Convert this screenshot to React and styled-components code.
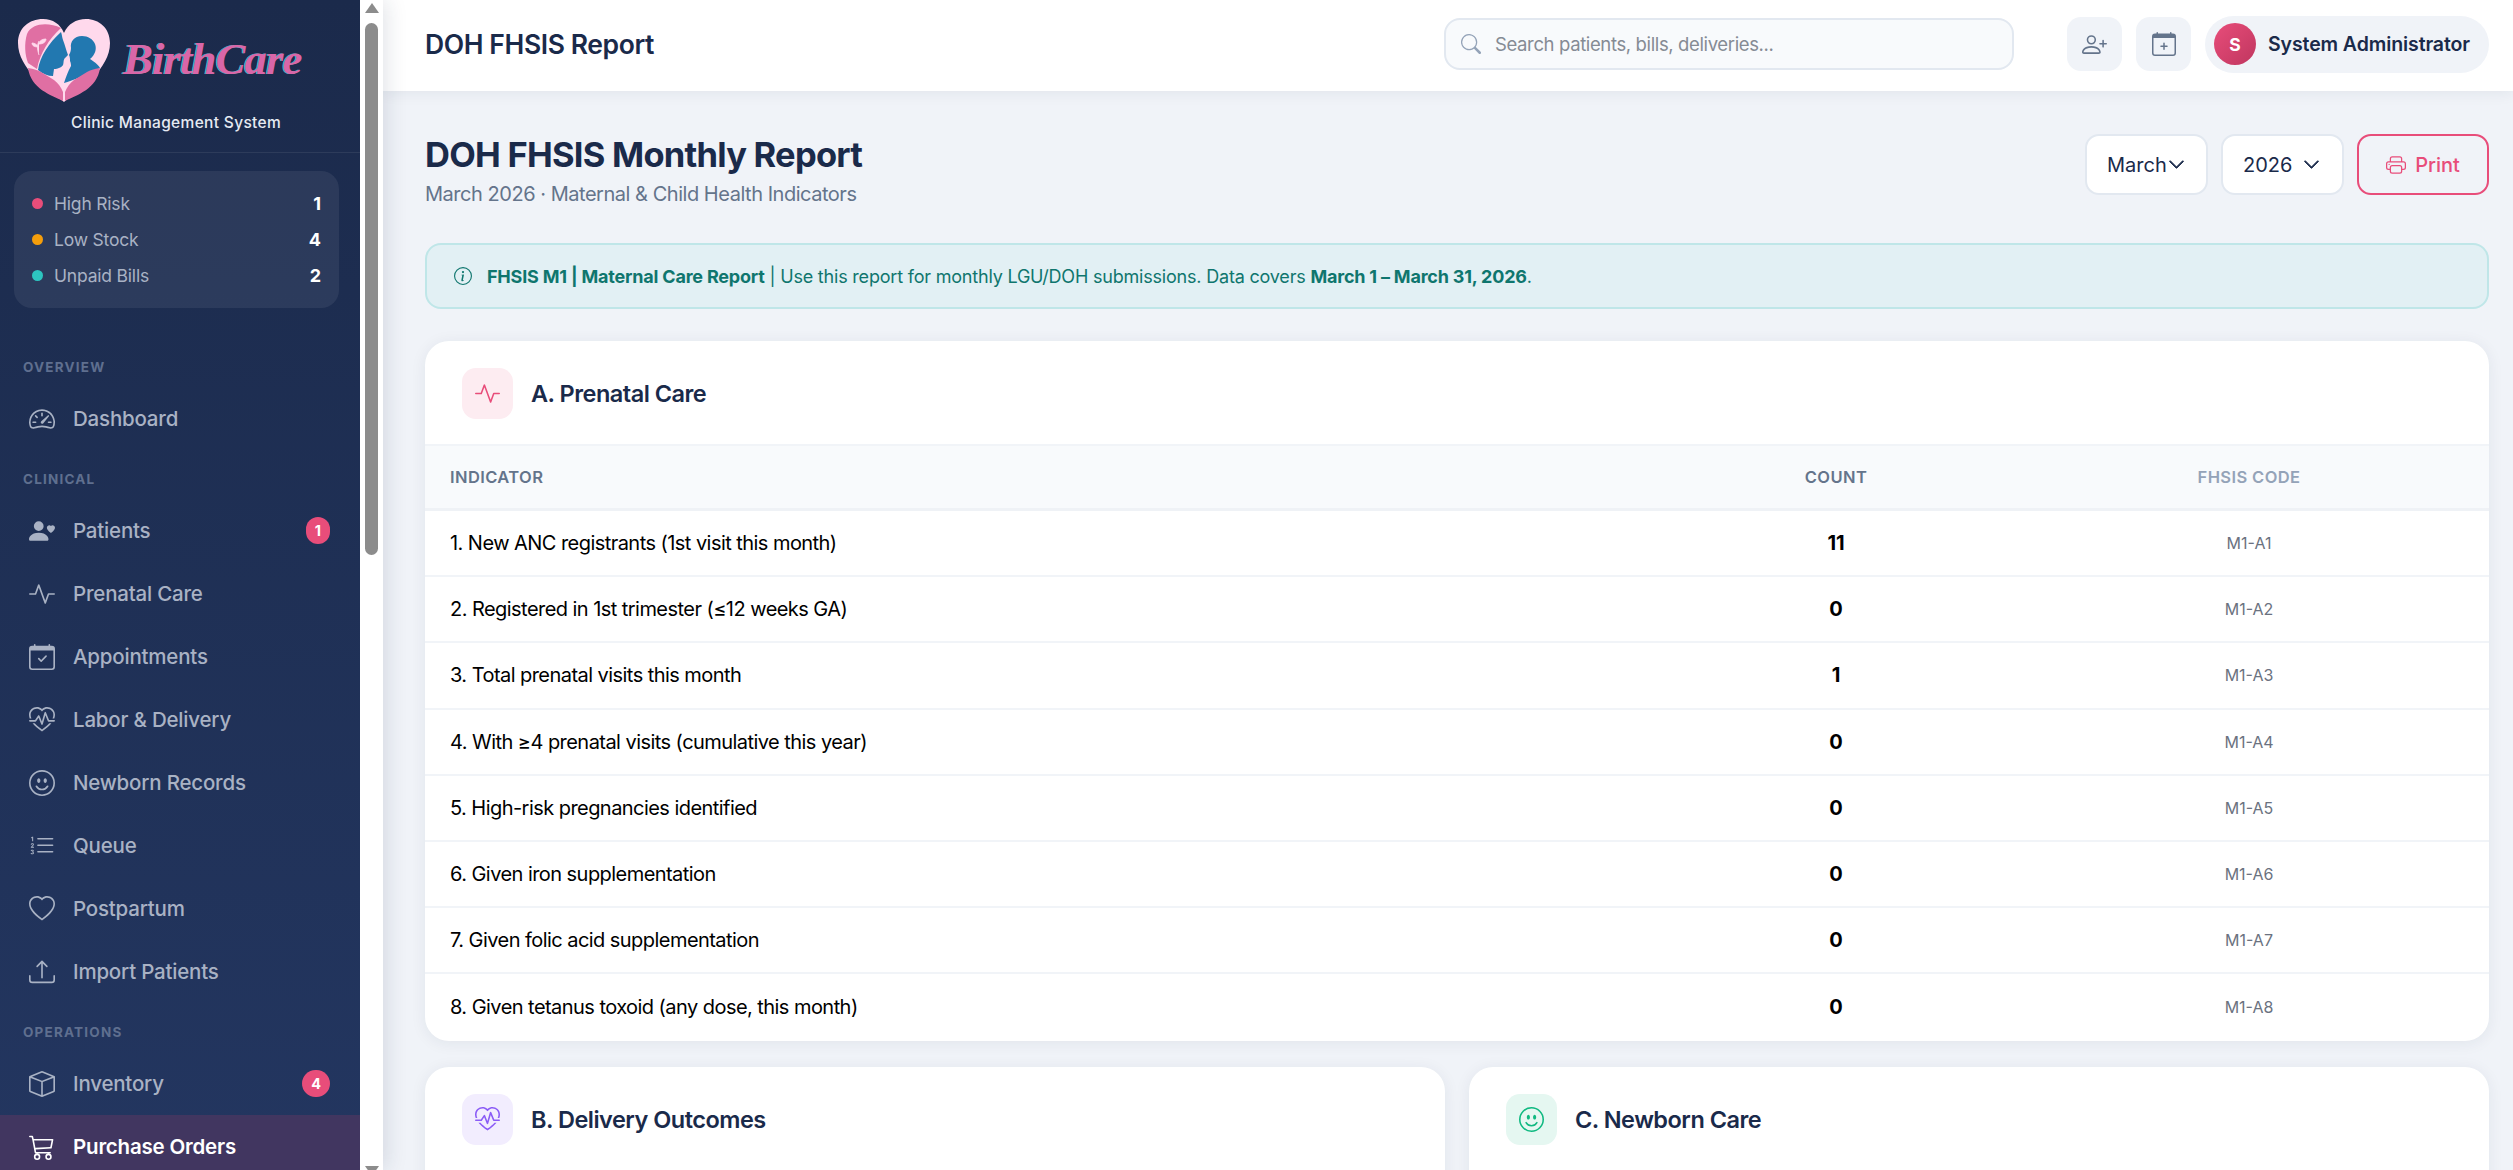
import styled, { createGlobalStyle } from "styled-components";
import {
  BsSpeedometer2,
  BsPersonHeart,
  BsActivity,
  BsCalendarCheck,
  BsHeartPulse,
  BsEmojiSmile,
  BsListOl,
  BsHeart,
  BsUpload,
  BsBox,
  BsCart3,
  BsSearch,
  BsPersonPlus,
  BsCalendarPlus,
  BsPrinter,
  BsInfoCircle,
  BsChevronDown,
} from "react-icons/bs";

const navGroups = [
  {
    label: "OVERVIEW",
    items: [{ name: "Dashboard", icon: BsSpeedometer2 }],
  },
  {
    label: "CLINICAL",
    items: [
      { name: "Patients", icon: BsPersonHeart, badge: 1 },
      { name: "Prenatal Care", icon: BsActivity },
      { name: "Appointments", icon: BsCalendarCheck },
      { name: "Labor & Delivery", icon: BsHeartPulse },
      { name: "Newborn Records", icon: BsEmojiSmile },
      { name: "Queue", icon: BsListOl },
      { name: "Postpartum", icon: BsHeart },
      { name: "Import Patients", icon: BsUpload },
    ],
  },
  {
    label: "OPERATIONS",
    items: [
      { name: "Inventory", icon: BsBox, badge: 4 },
      { name: "Purchase Orders", icon: BsCart3, active: true },
    ],
  },
];

const stats = [
  { label: "High Risk", value: 1, color: "#e84d7a" },
  { label: "Low Stock", value: 4, color: "#f59e0b" },
  { label: "Unpaid Bills", value: 2, color: "#2dc5c0" },
];

const prenatalRows = [
  ["1. New ANC registrants (1st visit this month)", 11, "M1-A1"],
  ["2. Registered in 1st trimester (≤12 weeks GA)", 0, "M1-A2"],
  ["3. Total prenatal visits this month", 1, "M1-A3"],
  ["4. With ≥4 prenatal visits (cumulative this year)", 0, "M1-A4"],
  ["5. High-risk pregnancies identified", 0, "M1-A5"],
  ["6. Given iron supplementation", 0, "M1-A6"],
  ["7. Given folic acid supplementation", 0, "M1-A7"],
  ["8. Given tetanus toxoid (any dose, this month)", 0, "M1-A8"],
];

const App = () => {
  return (
    <Shell>
      <GlobalStyle />
      <SideWrap>
        <Sidebar>
          <Brand>
            <LogoRow>
              <svg width="92" height="84" viewBox="0 0 92 84">
                <path
                  d="M46 83C30 70 0 50 0 24 0 9 11 0 25 0c10 0 17 5 21 14C50 5 58 0 68 0c13 0 24 9 24 24 0 26-30 46-46 59z"
                  fill="#ffd9ec"
                />
                <path
                  d="M43 9C30 3 14 4 9 15c-3 10-2 21 1 29l9 6c3-16 12-30 24-41z"
                  fill="#e06fa3"
                />
                <path
                  d="M21 36c-2-6-2-10 0-14M21 25c0-3 3-5 7-5 0 3-3 5-7 5zM20 28c-1-3-4-4-6-4 0 3 3 4 6 4z"
                  fill="#ffd9ec"
                  stroke="#ffd9ec"
                  strokeWidth="0.8"
                />
                <path
                  d="M43 13C31 24 22 37 20 51c5 4 10 6 15 6l1-7c4 0 8-2 9-4 1-2 0-5 2-7l3-3c-2-5-3-10-5-15-1-3-1-5-2-8z"
                  fill="#2278b0"
                />
                <path
                  d="M64 17c-8 0-12 6-11 12 0 3-1 5-2 7 1 2 1 4 1 6 1 2 1 4 1 5-3 5-5 11-7 17 8-2 26-10 36-15-2-4-7-7-10-9 5-4 7-10 5-15-2-5-7-8-13-8z"
                  fill="#2278b0"
                />
                <path
                  d="M10 49c6 1 10 2 13 4l13 8c4 3 7 7 9 12v9C33 76 13 70 10 49zM82 49c-6 1-10 2-13 4L56 61c-4 3-7 7-9 12v9c12-6 32-12 35-33z"
                  fill="#e06fa3"
                />
              </svg>
              <LogoText>BirthCare</LogoText>
            </LogoRow>
            <BrandSub>Clinic Management System</BrandSub>
          </Brand>

          <StatBox>
            {stats.map((stat) => (
              <StatRow key={stat.label}>
                <StatDot color={stat.color} />
                <StatLabel>{stat.label}</StatLabel>
                <StatValue>{stat.value}</StatValue>
              </StatRow>
            ))}
          </StatBox>

          {navGroups.map((group) => (
            <div key={group.label}>
              <NavLabel>{group.label}</NavLabel>
              {group.items.map((item) => (
                <NavItem key={item.name} $active={item.active}>
                  <item.icon size={26} />
                  <NavText>{item.name}</NavText>
                  {item.badge && <NavBadge>{item.badge}</NavBadge>}
                </NavItem>
              ))}
            </div>
          ))}
        </Sidebar>
        <ScrollTrack>
          <ArrowUp />
          <ScrollThumb />
          <ArrowDown />
        </ScrollTrack>
      </SideWrap>

      <Main>
        <Topbar>
          <TopTitle>DOH FHSIS Report</TopTitle>
          <SearchBox>
            <BsSearch size={20} color="#94a3b8" />
            <SearchInput placeholder="Search patients, bills, deliveries..." />
          </SearchBox>
          <SquareButton>
            <BsPersonPlus size={25} />
          </SquareButton>
          <SquareButton>
            <BsCalendarPlus size={24} />
          </SquareButton>
          <UserPill>
            <UserAvatar>S</UserAvatar>
            <UserName>System Administrator</UserName>
          </UserPill>
        </Topbar>

        <Content>
          <PageHead>
            <div>
              <PageTitle>DOH FHSIS Monthly Report</PageTitle>
              <PageSub>March 2026 · Maternal &amp; Child Health Indicators</PageSub>
            </div>
            <PageActions>
              <SelectBox>
                March
                <BsChevronDown size={17} strokeWidth={0.9} />
              </SelectBox>
              <SelectBox $wide>
                2026
                <BsChevronDown size={17} strokeWidth={0.9} />
              </SelectBox>
              <PrintButton>
                <BsPrinter size={20} />
                Print
              </PrintButton>
            </PageActions>
          </PageHead>

          <Banner>
            <BsInfoCircle size={18} />
            <span>
              <strong>FHSIS M1 | Maternal Care Report</strong> | Use this report
              for monthly LGU/DOH submissions. Data covers{" "}
              <strong>March 1 – March 31, 2026</strong>.
            </span>
          </Banner>

          <Card>
            <CardHeader>
              <CardIcon $bg="#fdecf1" $color="#e84d7a">
                <BsActivity size={25} />
              </CardIcon>
              <CardTitle>A. Prenatal Care</CardTitle>
            </CardHeader>
            <TableHead>
              <HeadCell>INDICATOR</HeadCell>
              <HeadCell $center>COUNT</HeadCell>
              <HeadCell $center $muted>
                FHSIS CODE
              </HeadCell>
            </TableHead>
            {prenatalRows.map(([name, count, code]) => (
              <TableRow key={code}>
                <RowName>{name}</RowName>
                <RowCount>{count}</RowCount>
                <RowCode>{code}</RowCode>
              </TableRow>
            ))}
          </Card>

          <TwoCards>
            <TallCard>
              <CardHeader>
                <CardIcon $bg="#f2edfe" $color="#8b5cf6">
                  <BsHeartPulse size={25} />
                </CardIcon>
                <CardTitle>B. Delivery Outcomes</CardTitle>
              </CardHeader>
            </TallCard>
            <TallCard>
              <CardHeader>
                <CardIcon $bg="#e5f7f1" $color="#10b981">
                  <BsEmojiSmile size={25} />
                </CardIcon>
                <CardTitle>C. Newborn Care</CardTitle>
              </CardHeader>
            </TallCard>
          </TwoCards>
        </Content>
      </Main>
    </Shell>
  );
};

export default App;

const GlobalStyle = createGlobalStyle`
  html, body {
    margin: 0;
    height: 100%;
    overflow: hidden;
  }
  body {
    font-family: Inter, "Noto Sans", sans-serif;
    background: #f0f3f8;
  }
  * {
    box-sizing: border-box;
  }
`;

const Shell = styled.div`
  display: flex;
  height: 100vh;
  overflow: hidden;
`;

const SideWrap = styled.div`
  display: flex;
  flex: 0 0 383px;
  position: relative;
  z-index: 2;
  box-shadow: 4px 0 20px rgba(26, 42, 74, 0.12);
`;

const Sidebar = styled.aside`
  width: 360px;
  overflow: hidden;
  background: linear-gradient(180deg, #1b2a4b 0%, #233660 100%);
`;

const ScrollTrack = styled.div`
  width: 23px;
  background: #fff;
  overflow: hidden;
  display: flex;
  flex-direction: column;
  align-items: center;
  padding: 3px 5px 0 5px;
`;

const ArrowUp = styled.div`
  flex: none;
  width: 0;
  height: 0;
  border-left: 7.5px solid transparent;
  border-right: 7.5px solid transparent;
  border-bottom: 10px solid #8c8c8c;
`;

const ArrowDown = styled.div`
  flex: none;
  margin-top: 611px;
  width: 0;
  height: 0;
  border-left: 7.5px solid transparent;
  border-right: 7.5px solid transparent;
  border-top: 10px solid #8c8c8c;
`;

const ScrollThumb = styled.div`
  flex: none;
  width: 13px;
  height: 532px;
  margin-top: 10px;
  background: #8c8c8c;
  border-radius: 7px;
`;

const Brand = styled.div`
  height: 153px;
  padding: 19px 0 0 18px;
  border-bottom: 1px solid rgba(255, 255, 255, 0.08);
`;

const LogoRow = styled.div`
  display: flex;
  align-items: center;
  gap: 13px;
  height: 84px;
`;

const LogoText = styled.span`
  margin-top: -4px;
  font-family: "Liberation Serif", serif;
  font-style: italic;
  font-weight: 700;
  font-size: 45px;
  letter-spacing: -1px;
  color: #d966a8;
  text-shadow: -1px 0 0 #46c8d0;
`;

const BrandSub = styled.div`
  margin: 10px 0 0 53px;
  font-size: 15.5px;
  font-weight: 500;
  line-height: 20px;
  letter-spacing: 0.33px;
  color: #e6eaf2;
  white-space: nowrap;
`;

const StatBox = styled.div`
  margin: 18px 21px 30px 14px;
  height: 137px;
  padding: 14px 18px;
  border-radius: 18px;
  background: rgba(255, 255, 255, 0.07);
  display: flex;
  flex-direction: column;
  justify-content: center;
`;

const StatRow = styled.div`
  display: flex;
  align-items: center;
  height: 36.4px;
`;

const StatDot = styled.span`
  width: 11px;
  height: 11px;
  margin-right: 11px;
  border-radius: 50%;
  background: ${(p) => p.color};
`;

const StatLabel = styled.span`
  flex: 1;
  font-size: 17.5px;
  letter-spacing: -0.2px;
  color: #a9b2c4;
`;

const StatValue = styled.span`
  font-size: 18px;
  font-weight: 700;
  color: #fff;
`;

const NavLabel = styled.div`
  padding: 21px 23px 11px;
  height: 49px;
  font-size: 13.5px;
  font-weight: 700;
  line-height: 17px;
  letter-spacing: 1.2px;
  color: #5f6f8f;
`;

const NavItem = styled.div`
  display: flex;
  align-items: center;
  height: 63px;
  padding: 0 30px 0 29px;
  color: ${(p) => (p.$active ? "#fff" : "#a9b2c4")};
  background: ${(p) => (p.$active ? "#413660" : "transparent")};
  font-weight: ${(p) => (p.$active ? 600 : 500)};
`;

const NavText = styled.span`
  flex: 1;
  margin-left: 18px;
  font-size: 20.5px;
  letter-spacing: -0.2px;
`;

const NavBadge = styled.span`
  min-width: 24px;
  height: 27px;
  padding: 0 9px;
  border-radius: 14px;
  background: #e84d7a;
  color: #fff;
  font-size: 14.5px;
  font-weight: 700;
  display: flex;
  align-items: center;
  justify-content: center;
`;

const Main = styled.main`
  flex: 1;
  min-width: 0;
  display: flex;
  flex-direction: column;
`;

const Topbar = styled.header`
  flex: none;
  height: 91px;
  padding: 0 24px 3px 42px;
  background: #fff;
  box-shadow: 0 2px 14px rgba(26, 42, 74, 0.07);
  display: flex;
  align-items: center;
  position: relative;
  z-index: 1;
`;

const TopTitle = styled.h1`
  flex: 1;
  margin: 0;
  font-size: 26.5px;
  font-weight: 600;
  letter-spacing: -0.4px;
  color: #1a2a4a;
`;

const SearchBox = styled.label`
  width: 570px;
  height: 52px;
  margin-right: 53px;
  padding: 0 20px 0 15px;
  border: 2px solid #e2e8f0;
  border-radius: 16px;
  background: #f8fafc;
  display: flex;
  align-items: center;
  gap: 12px;
`;

const SearchInput = styled.input`
  flex: 1;
  min-width: 0;
  border: none;
  outline: none;
  background: transparent;
  font-family: inherit;
  font-size: 18.5px;
  letter-spacing: -0.37px;
  color: #1a2a4a;
  &::placeholder {
    color: #858b94;
    opacity: 1;
  }
`;

const SquareButton = styled.div`
  width: 55px;
  height: 54px;
  margin-right: 14px;
  border-radius: 14px;
  background: #f0f3f8;
  color: #64748b;
  display: flex;
  align-items: center;
  justify-content: center;
`;

const UserPill = styled.div`
  width: 284px;
  height: 57px;
  padding: 0 0 0 9px;
  border-radius: 29px;
  background: #f0f3f8;
  display: flex;
  align-items: center;
  gap: 12px;
`;

const UserAvatar = styled.div`
  width: 42px;
  height: 42px;
  border-radius: 50%;
  background: linear-gradient(135deg, #e84d7a, #c0365f);
  color: #fff;
  font-size: 17.5px;
  font-weight: 700;
  display: flex;
  align-items: center;
  justify-content: center;
`;

const UserName = styled.span`
  font-size: 19.5px;
  font-weight: 600;
  letter-spacing: -0.1px;
  color: #1a2a4a;
  white-space: nowrap;
`;

const Content = styled.div`
  flex: 1;
  min-height: 0;
  overflow: hidden;
  padding: 43px 24px 0 42px;
`;

const PageHead = styled.div`
  height: 109px;
  display: flex;
  justify-content: space-between;
  align-items: flex-start;
`;

const PageTitle = styled.h2`
  margin: 0;
  font-size: 34.5px;
  font-weight: 700;
  line-height: 42px;
  letter-spacing: -0.75px;
  color: #1a2a4a;
`;

const PageSub = styled.p`
  margin: 5px 0 0;
  font-size: 20px;
  line-height: 26px;
  letter-spacing: -0.47px;
  color: #64748b;
`;

const PageActions = styled.div`
  display: flex;
  gap: 13px;
`;

const SelectBox = styled.div`
  width: 123px;
  height: 61px;
  padding: 0 ${(p) => (p.$wide ? "22px 0 20px" : "21px 0 20px")};
  border: 2px solid #e2e8f0;
  border-radius: 14px;
  background: #fff;
  color: #1a2a4a;
  font-size: 20px;
  display: flex;
  align-items: center;
  justify-content: space-between;
`;

const PrintButton = styled.div`
  width: 132px;
  height: 61px;
  border: 2px solid #e84d7a;
  border-radius: 14px;
  color: #e84d7a;
  font-size: 20px;
  font-weight: 500;
  display: flex;
  align-items: center;
  justify-content: center;
  gap: 9px;
`;

const Banner = styled.div`
  height: 66px;
  margin-bottom: 32px;
  padding: 0 27px;
  border: 2px solid #bfe6e8;
  border-radius: 16px;
  background: #e2f0f4;
  color: #0f766e;
  font-size: 18px;
  letter-spacing: -0.2px;
  display: flex;
  align-items: center;
  gap: 15px;
  strong {
    font-weight: 700;
  }
`;

const Card = styled.section`
  background: #fff;
  border-radius: 24px;
  box-shadow: 0 2px 16px rgba(26, 42, 74, 0.07);
  overflow: hidden;
`;

const TallCard = styled(Card)`
  min-height: 300px;
`;

const CardHeader = styled.div`
  height: 105px;
  padding: 2px 37px 0;
  border-bottom: 2px solid #f1f4f8;
  display: flex;
  align-items: center;
  gap: 18px;
`;

const CardIcon = styled.div`
  width: 51px;
  height: 51px;
  border-radius: 14px;
  background: ${(p) => p.$bg};
  color: ${(p) => p.$color};
  display: flex;
  align-items: center;
  justify-content: center;
`;

const CardTitle = styled.h3`
  margin: 0;
  font-size: 23.5px;
  font-weight: 600;
  letter-spacing: -0.5px;
  color: #1a2a4a;
`;

const TableHead = styled.div`
  height: 65px;
  background: #f8fafc;
  border-bottom: 3px solid #eff2f6;
  display: grid;
  grid-template-columns: 1fr 346px 480px;
  align-items: center;
  padding-left: 25px;
`;

const HeadCell = styled.div`
  font-size: 16.5px;
  font-weight: 600;
  letter-spacing: 0.4px;
  text-align: ${(p) => (p.$center ? "center" : "left")};
  color: ${(p) => (p.$muted ? "#94a3b8" : "#64748b")};
`;

const TableRow = styled.div`
  height: 66.2px;
  padding-left: 25px;
  display: grid;
  grid-template-columns: 1fr 346px 480px;
  align-items: center;
  border-bottom: 2px solid #f1f4f8;
  &:last-child {
    border-bottom: none;
  }
`;

const RowName = styled.div`
  font-size: 20px;
  letter-spacing: -0.55px;
  color: #000;
`;

const RowCount = styled.div`
  font-size: 20px;
  font-weight: 700;
  text-align: center;
  color: #000;
`;

const RowCode = styled.div`
  font-size: 16px;
  text-align: center;
  color: #6b7280;
`;

const TwoCards = styled.div`
  margin-top: 26px;
  display: grid;
  grid-template-columns: 1fr 1fr;
  gap: 24px;
`;
